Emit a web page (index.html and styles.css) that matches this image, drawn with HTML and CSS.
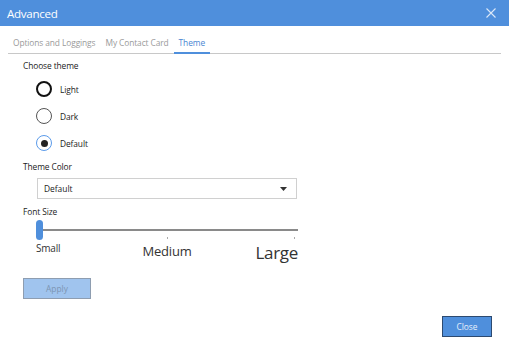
FILE: index.html
```html
<!DOCTYPE html>
<html>
<head>
<meta charset="utf-8">
<link rel="stylesheet" href="styles.css">
</head>
<body>
<div class="dialog">
  <div class="titlebar">
    <span class="title">Advanced</span>
    <svg class="close-x" width="10" height="10" viewBox="0 0 10 10"><path d="M0.5 0.5 L9.5 9.5 M9.5 0.5 L0.5 9.5" stroke="#dce8f8" stroke-width="1.1" fill="none"/></svg>
  </div>
  <div class="tabs">
    <span class="tab">Options and Loggings</span>
    <span class="tab">My Contact Card</span>
    <span class="tab active">Theme</span>
  </div>
  <div class="content">
    <div class="label choose">Choose theme</div>
    <div class="radios">
      <div class="radio-row"><span class="radio r-light"></span><span class="rlabel">Light</span></div>
      <div class="radio-row"><span class="radio r-dark"></span><span class="rlabel">Dark</span></div>
      <div class="radio-row"><span class="radio r-default"><span class="dot"></span></span><span class="rlabel">Default</span></div>
    </div>
    <div class="label tc">Theme Color</div>
    <div class="select"><span>Default</span><svg width="7" height="4" viewBox="0 0 7 4"><path d="M0 0 L7 0 L3.5 4 Z" fill="#333"/></svg></div>
    <div class="label fs">Font Size</div>
    <div class="slider">
      <div class="track"></div>
      <div class="thumb"></div>
      <div class="tick t-mid"></div>
      <div class="tick t-end"></div>
      <div class="slabels">
        <span class="s-small">Small</span>
        <span class="s-med">Medium</span>
        <span class="s-large">Large</span>
      </div>
    </div>
    <div class="apply-row"><button class="btn apply">Apply</button></div>
  </div>
  <div class="footer"><button class="btn close">Close</button></div>
</div>
</body>
</html>
```
FILE: styles.css
```css
* { box-sizing: border-box; }
html, body { margin: 0; padding: 0; background: #fff; }
body { font-family: "Open Sans", "Noto Sans", sans-serif; color: #333; width: 509px; height: 354px; overflow: hidden; }
.dialog { width: 509px; height: 354px; display: flex; flex-direction: column; }
.titlebar { height: 26px; background: #4f8fdc; display: flex; align-items: center; justify-content: space-between; padding: 0 13px 0 7px; }
.title { color: #fff; font-size: 11.6px; letter-spacing: -0.3px; }
.close-x { display: block; }
.tabs { margin: 0 8px; height: 28px; border-bottom: 1px solid #c8c8c8; display: flex; align-items: flex-end; }
.tab { font-size: 8.4px; color: #9a9a9a; padding: 0 5px 3px; border-bottom: 2px solid transparent; margin-bottom: -1px; line-height: 12px; letter-spacing: -0.1px; }
.tab.active { color: #4a86d2; border-bottom-color: #4f8fdc; }
.content { padding-left: 23px; display: flex; flex-direction: column; align-items: flex-start; }
.label { font-size: 8.4px; color: #222; line-height: 12px; letter-spacing: -0.1px; }
.choose { margin-top: 6px; }
.radios { display: flex; flex-direction: column; gap: 11px; margin-top: 9px; margin-left: 13px; }
.radio-row { display: flex; align-items: center; height: 16px; }
.radio { width: 16px; height: 16px; border-radius: 50%; border: 2px solid #111; display: flex; align-items: center; justify-content: center; }
.r-dark { border: 1.6px solid #555; }
.r-default { border: 1.6px solid #5b9bea; }
.dot { width: 7px; height: 7px; border-radius: 50%; background: #222; }
.rlabel { font-size: 8.4px; color: #222; margin-left: 8px; letter-spacing: -0.1px; }
.tc { margin-top: 10px; }
.select { margin-top: 5px; margin-left: 14px; width: 260px; height: 21px; border: 1px solid #d0d0d0; display: flex; align-items: center; justify-content: space-between; padding: 0 6px 0 6px; font-size: 8.4px; color: #222; }
.select svg { display: block; margin-right: 3px; }
.fs { margin-top: 7px; }
.slider { position: relative; margin-left: 13px; width: 262px; margin-top: 2px; }
.track { height: 2px; background: #8a8a8a; margin-top: 9px; margin-left: 3px; }
.thumb { position: absolute; left: 0; top: 0; width: 7px; height: 20px; border-radius: 4px; background: #4f8fdc; }
.tick { position: absolute; top: 17px; width: 1px; height: 2px; background: #aaa; }
.t-mid { left: 131px; }
.t-end { left: 258px; }
.slabels { display: grid; grid-template-columns: 1fr 1fr 1fr; align-items: start; margin-top: 10px; }
.s-small { font-size: 10px; justify-self: start; line-height: 14px; letter-spacing: -0.2px; }
.s-med { font-size: 13px; justify-self: center; line-height: 16px; letter-spacing: -0.2px; margin-top: 2px; }
.s-large { font-size: 17px; justify-self: end; line-height: 19px; letter-spacing: -0.3px; margin-top: 2px; }
.apply-row { margin-top: 13px; }
.btn { font-family: inherit; font-size: 8.4px; cursor: default; }
.apply { width: 68px; height: 21px; background: #a0c4ee; border: 1px solid #8e9db0; color: #7c94b2; }
.footer { display: flex; justify-content: flex-end; padding: 17px 17px 0 0; }
.close { width: 50px; height: 21px; background: #4f8fdc; border: 1px solid #2d4a70; color: #e8f0fb; }
```
